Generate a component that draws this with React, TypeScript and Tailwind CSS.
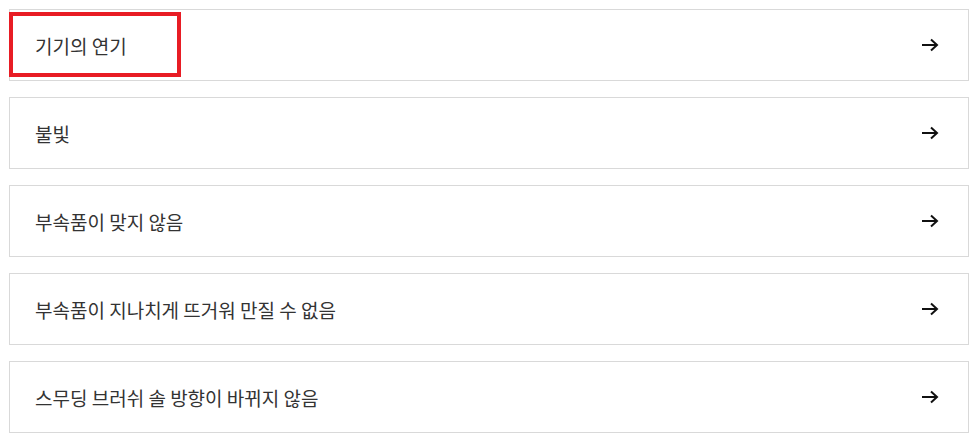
import React from "react";

const items = [
  "기기의 연기",
  "불빛",
  "부속품이 맞지 않음",
  "부속품이 지나치게 뜨거워 만질 수 없음",
  "스무딩 브러쉬 솔 방향이 바뀌지 않음",
];

function Arrow() {
  return (
    <svg width="18" height="14" viewBox="0 0 18 14" fill="none" className="block">
      <path d="M1 7H16" stroke="#111" strokeWidth="2" />
      <path d="M10 1.5L16 7L10 12.5" stroke="#111" strokeWidth="2" />
    </svg>
  );
}

export default function App() {
  return (
    <div className="w-[974px] h-[443px] bg-white pt-[9px] pl-[9px]" style={{ fontFamily: '"Noto Sans CJK KR", "Noto Sans", sans-serif' }}>
      <div className="flex flex-col gap-[16px] w-[960px]">
        {items.map((t, i) => (
          <div key={i} className="relative h-[72px] border border-[#d9d9d9] flex items-center justify-between pl-[25px] pr-[29px]">
            <span className="text-[19px] text-[#333] leading-none">{t}</span>
            <Arrow />
            {i === 0 && (
              <div className="absolute left-[-1px] top-[2px] w-[172px] h-[65px] border-4 border-[#e81c24]" />
            )}
          </div>
        ))}
      </div>
    </div>
  );
}
